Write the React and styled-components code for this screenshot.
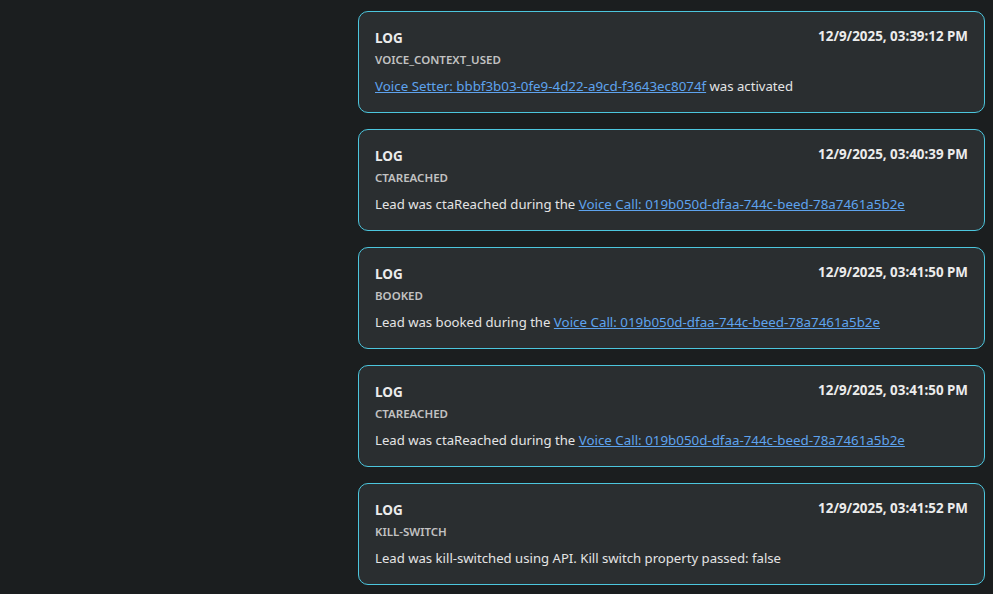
import styled, { createGlobalStyle } from "styled-components";

const GlobalStyle = createGlobalStyle`
  html, body {
    margin: 0;
    padding: 0;
    background: #1b1e1f;
  }
  body {
    font-family: "Noto Sans", "Open Sans", sans-serif;
    color: #e8e8e8;
  }
`;

const Page = styled.div`
  min-height: 594px;
  padding: 11px 8px 0 358px;
  display: flex;
  flex-direction: column;
  gap: 16px;
  box-sizing: border-box;
`;

const Card = styled.div`
  height: 102px;
  box-sizing: border-box;
  background: #2a2e30;
  border: 1px solid #4cc6dd;
  border-radius: 10px;
  padding: 15px 16px 0 16px;
`;

const Header = styled.div`
  display: flex;
  justify-content: space-between;
  align-items: flex-start;
`;

const Kind = styled.div`
  margin-top: 1px;
  font-size: 13.5px;
  font-weight: 700;
  line-height: 20px;
  color: #ececec;
`;

const Stamp = styled.div`
  font-size: 13.4px;
  font-weight: 700;
  line-height: 18px;
  color: #ececec;
`;

const Event = styled.div`
  margin-top: 4px;
  font-size: 11.5px;
  font-weight: 600;
  line-height: 16px;
  color: #c2c2c2;
`;

const Message = styled.div`
  margin-top: 8px;
  font-size: 13.15px;
  line-height: 20px;
  color: #e4e4e4;
`;

const Ref = styled.a`
  font-size: 13.35px;
  color: #5ea3ee;
  text-decoration: underline;
  cursor: pointer;
`;

const logs = [
  {
    time: "12/9/2025, 03:39:12 PM",
    event: "VOICE_CONTEXT_USED",
    before: "",
    link: "Voice Setter: bbbf3b03-0fe9-4d22-a9cd-f3643ec8074f",
    after: " was activated",
  },
  {
    time: "12/9/2025, 03:40:39 PM",
    event: "CTAREACHED",
    before: "Lead was ctaReached during the ",
    link: "Voice Call: 019b050d-dfaa-744c-beed-78a7461a5b2e",
    after: "",
  },
  {
    time: "12/9/2025, 03:41:50 PM",
    event: "BOOKED",
    before: "Lead was booked during the ",
    link: "Voice Call: 019b050d-dfaa-744c-beed-78a7461a5b2e",
    after: "",
  },
  {
    time: "12/9/2025, 03:41:50 PM",
    event: "CTAREACHED",
    before: "Lead was ctaReached during the ",
    link: "Voice Call: 019b050d-dfaa-744c-beed-78a7461a5b2e",
    after: "",
  },
  {
    time: "12/9/2025, 03:41:52 PM",
    event: "KILL-SWITCH",
    before: "Lead was kill-switched using API. Kill switch property passed: false",
    link: null,
    after: "",
  },
];

function LogCard({ log }) {
  return (
    <Card>
      <Header>
        <Kind>LOG</Kind>
        <Stamp>{log.time}</Stamp>
      </Header>
      <Event>{log.event}</Event>
      <Message>
        {log.before}
        {log.link && <Ref>{log.link}</Ref>}
        {log.after}
      </Message>
    </Card>
  );
}

export default function App() {
  return (
    <>
      <GlobalStyle />
      <Page>
        {logs.map((log, i) => (
          <LogCard key={i} log={log} />
        ))}
      </Page>
    </>
  );
}
